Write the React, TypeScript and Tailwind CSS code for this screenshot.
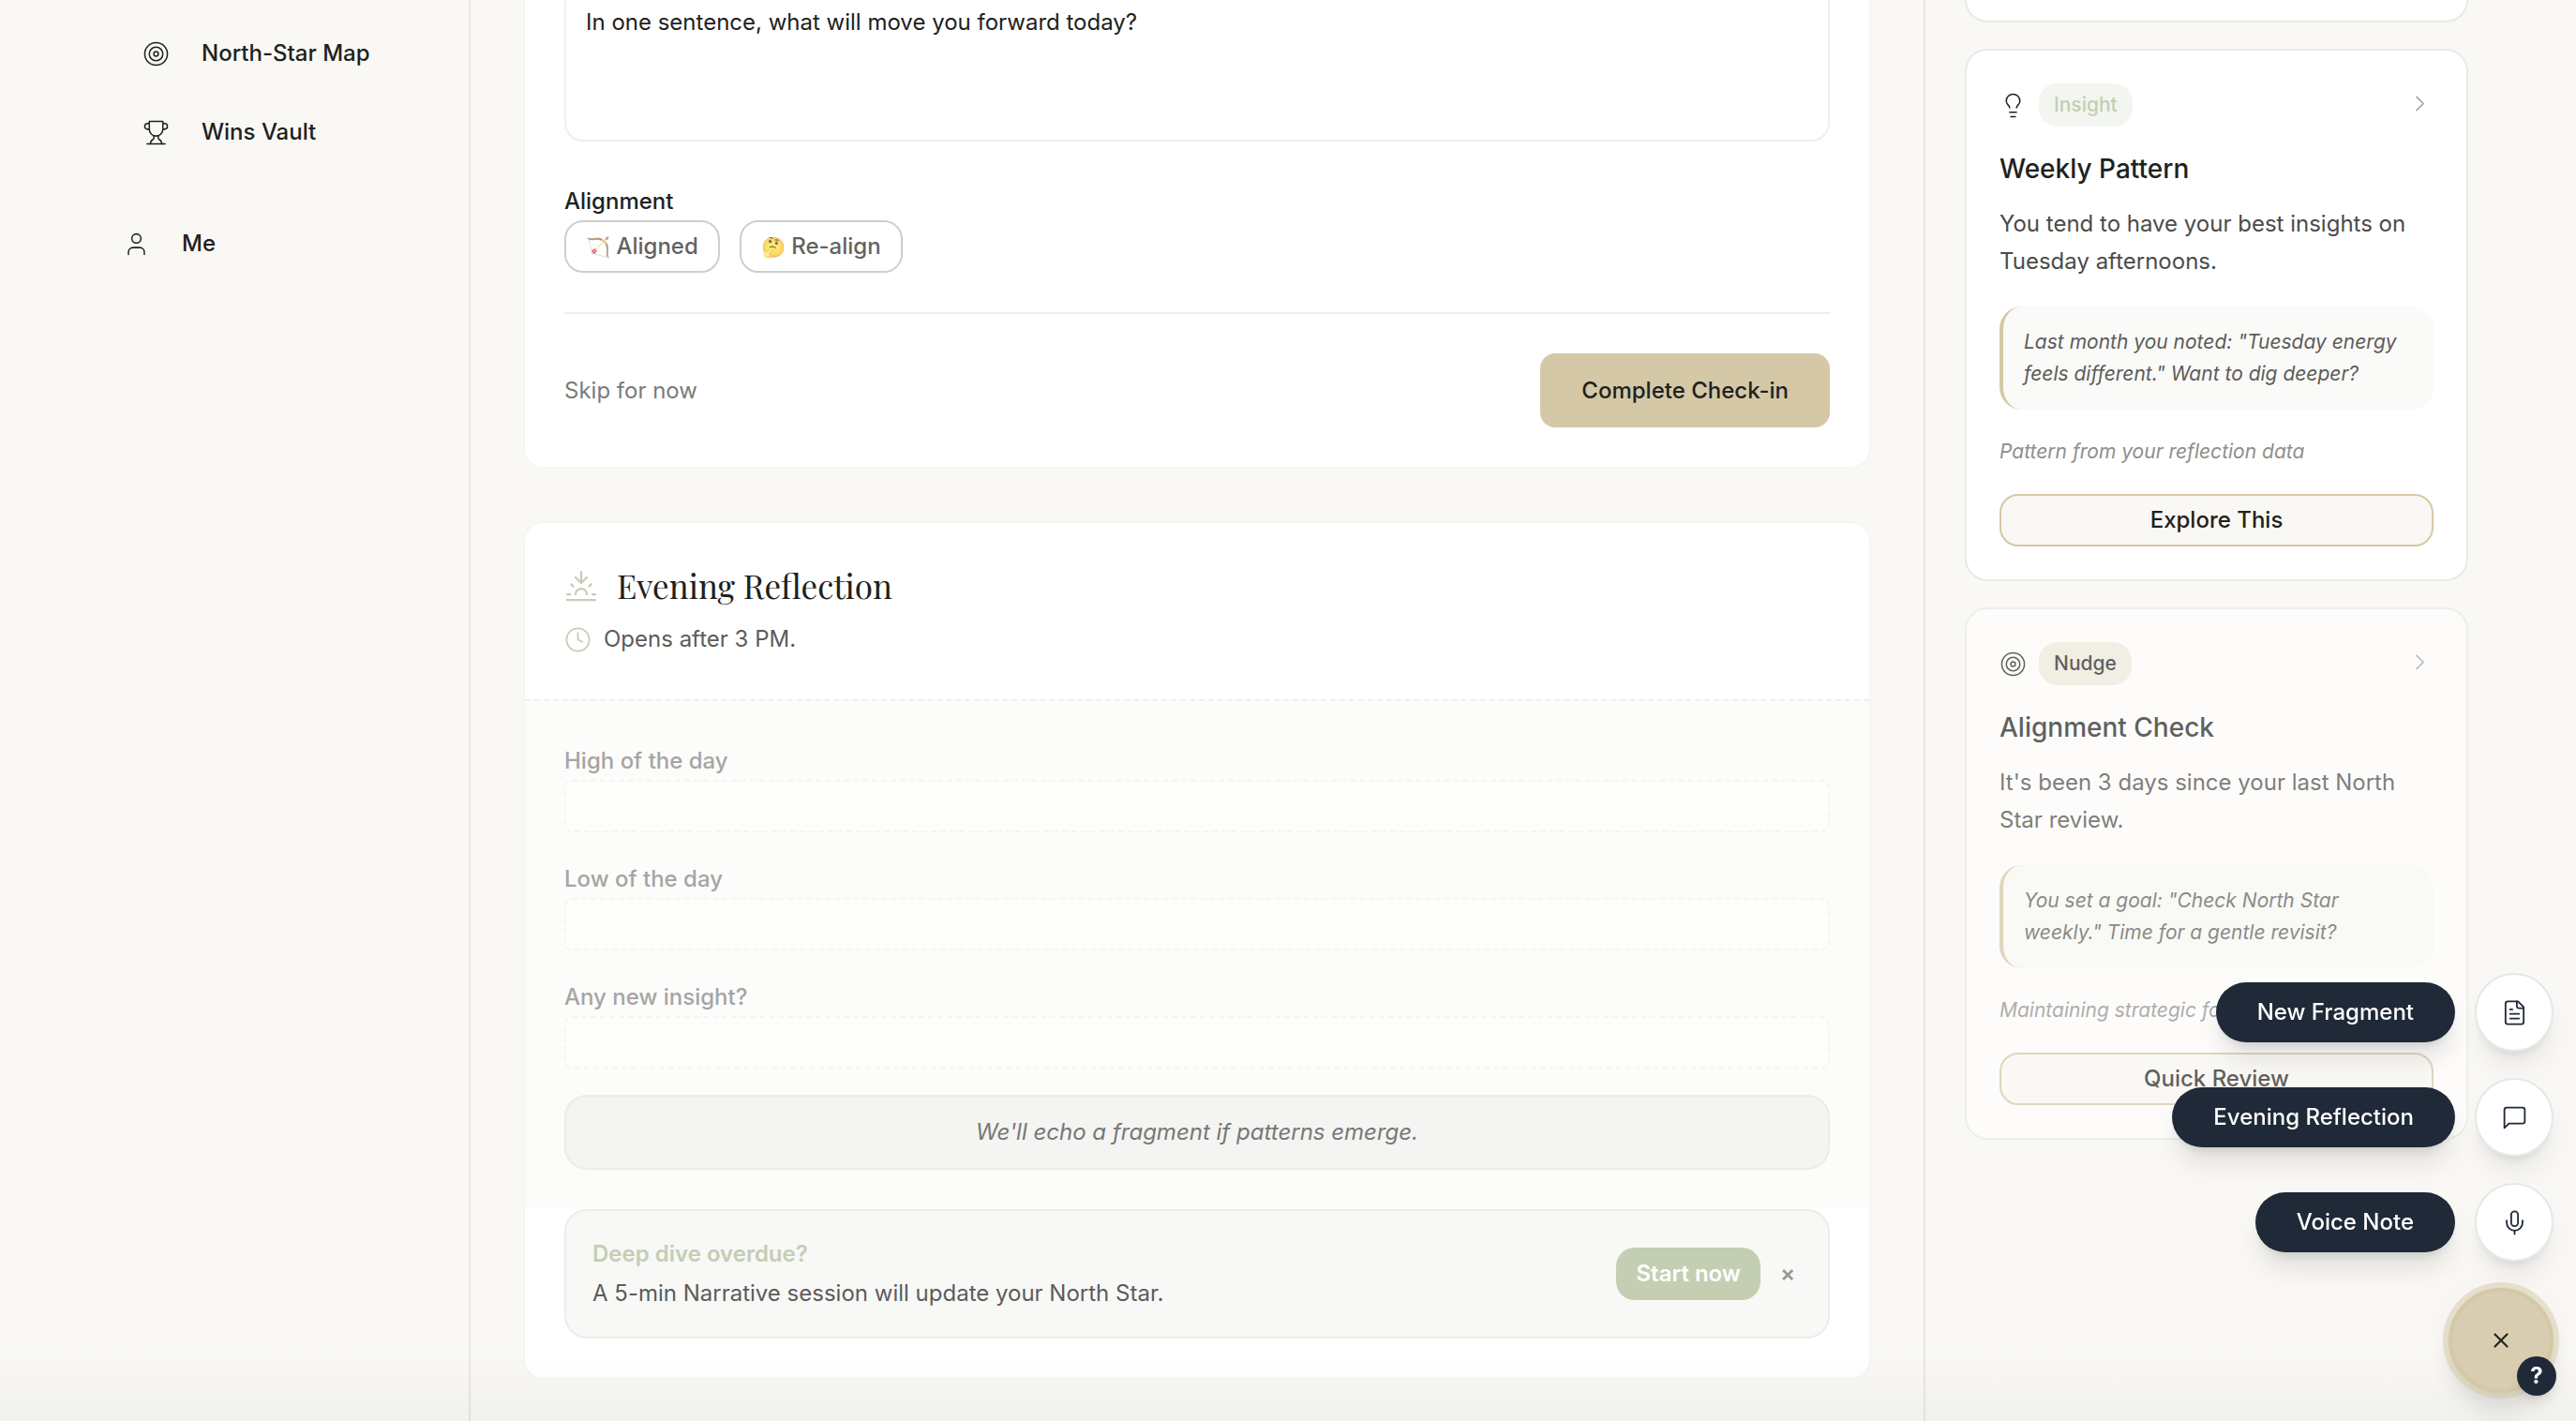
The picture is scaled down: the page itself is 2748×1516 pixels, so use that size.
import type { ReactNode } from "react";

const TARGET = [
  "M22 12a10 10 0 1 1-20 0a10 10 0 1 1 20 0Z",
  "M18 12a6 6 0 1 1-12 0a6 6 0 1 1 12 0Z",
  "M14 12a2 2 0 1 1-4 0a2 2 0 1 1 4 0Z",
];
const TROPHY = [
  "M6 9H4.5a2.5 2.5 0 0 1 0-5H6",
  "M18 9h1.5a2.5 2.5 0 0 0 0-5H18",
  "M4 22h16",
  "M10 14.66V17c0 .55-.47.98-.97 1.21C7.85 18.75 7 20.24 7 22",
  "M14 14.66V17c0 .55.47.98.97 1.21C16.15 18.75 17 20.24 17 22",
  "M18 2H6v7a6 6 0 0 0 12 0V2Z",
];
const USER = ["M19 21v-2a4 4 0 0 0-4-4H9a4 4 0 0 0-4 4v2", "M16 7a4 4 0 1 1-8 0a4 4 0 1 1 8 0Z"];
const SUNSET = [
  "M12 10V2",
  "m4.93 10.93 1.41 1.41",
  "M2 18h2",
  "M20 18h2",
  "m19.07 10.93-1.41 1.41",
  "M22 22H2",
  "m16 6-4 4-4-4",
  "M16 18a4 4 0 0 0-8 0",
];
const CLOCK = ["M22 12a10 10 0 1 1-20 0a10 10 0 1 1 20 0Z", "M12 6v6l4 2"];
const BULB = [
  "M15 14c.2-1 .7-1.7 1.5-2.5 1-.9 1.5-2.2 1.5-3.5A6 6 0 0 0 6 8c0 1 .2 2.2 1.5 3.5.7.7 1.3 1.5 1.5 2.5",
  "M9 18h6",
  "M10 22h4",
];
const CHEVRON = ["m9 18 6-6-6-6"];
const FILE_TEXT = [
  "M15 2H6a2 2 0 0 0-2 2v16a2 2 0 0 0 2 2h12a2 2 0 0 0 2-2V7Z",
  "M14 2v4a2 2 0 0 0 2 2h4",
  "M10 9H8",
  "M16 13H8",
  "M16 17H8",
];
const MESSAGE = ["M21 15a2 2 0 0 1-2 2H7l-4 4V5a2 2 0 0 1 2-2h14a2 2 0 0 1 2 2z"];
const MIC = [
  "M12 2a3 3 0 0 0-3 3v7a3 3 0 0 0 6 0V5a3 3 0 0 0-3-3Z",
  "M19 10v2a7 7 0 0 1-14 0v-2",
  "M12 19v3",
];
const CROSS = ["M18 6 6 18", "m6 6 12 12"];

function Icon({ paths, size = 29, stroke = 1.25, className }: { paths: string[]; size?: number; stroke?: number; className?: string }) {
  return (
    <svg
      aria-hidden="true"
      width={size}
      height={size}
      viewBox="0 0 24 24"
      fill="none"
      stroke="currentColor"
      strokeWidth={stroke}
      strokeLinecap="round"
      strokeLinejoin="round"
      className={className ?? "shrink-0"}
    >
      {paths.map((d) => (
        <path key={d} d={d} />
      ))}
    </svg>
  );
}

function NavItem({ paths, label, nested }: { paths: string[]; label: string; nested?: boolean }) {
  return (
    <a href="#" className={nested ? "flex items-center gap-[34px] pl-[37px] font-medium" : "flex items-center gap-[34px] pl-4 font-medium"}>
      <Icon paths={paths} />
      {label}
    </a>
  );
}

function AlignmentButton({ emoji, label }: { emoji: string; label: string }) {
  return (
    <button type="button" className="h-14 rounded-[20px] border-2 border-[#cfcfcf] px-[21px] font-medium">
      <span className="opacity-70">
        <span className="text-[21px]">{emoji}</span> {label}
      </span>
    </button>
  );
}

function LockedField({ id, label }: { id: string; label: string }) {
  return (
    <div className="flex flex-col">
      <label htmlFor={id} className="font-medium text-[#a5a5a3]">
        {label}
      </label>
      <input id={id} disabled className="h-14 w-full rounded-lg border-2 border-dashed border-[#f5f5f2] bg-[#fdfdfb] px-5" />
    </div>
  );
}

type InsightCardProps = {
  paths: string[];
  badge: string;
  badgeClass: string;
  title: string;
  body: string;
  quote: string;
  source: string;
  action: string;
  faded?: boolean;
};

function InsightCard(p: InsightCardProps) {
  return (
    <article
      className={
        p.faded
          ? "flex flex-col rounded-3xl border-2 border-[#e9e9e9] bg-white p-[35px] opacity-70"
          : "flex flex-col rounded-3xl border-2 border-[#e9e9e9] bg-white p-[35px]"
      }
    >
      <div className="flex items-center justify-between">
        <div className="flex items-center gap-[13px]">
          <Icon paths={p.paths} />
          <span className={p.badgeClass}>{p.badge}</span>
        </div>
        <button type="button" aria-label={"Open " + p.title} className="flex self-start pt-[7px] text-[#9a9a98]">
          <Icon paths={CHEVRON} />
        </button>
      </div>
      <h3 className="mt-[22px] text-[28px] leading-[46px] font-medium">{p.title}</h3>
      <p className="mt-4 text-[#4b4b49]">{p.body}</p>
      <blockquote className="mt-7 rounded-3xl border-l-4 border-[#d4c8a6] bg-[#fafaf8] px-[22px] py-[21px] text-[21px] leading-[34px] text-[#5c5c5a] italic">
        {p.quote}
      </blockquote>
      <p className="mt-7 text-[21px] leading-[34px] text-[#8e8e8c] italic">{p.source}</p>
      <button type="button" className="mt-7 h-14 rounded-[20px] border-2 border-[#d4c8a6] bg-[#f9f8f4] font-medium">
        {p.action}
      </button>
    </article>
  );
}

function QuickAction({ label, paths }: { label: string; paths: string[] }) {
  return (
    <div className="flex items-center gap-[21px]">
      <span className="rounded-full bg-[#1f2937] px-11 py-3 leading-10 font-medium text-white shadow-[0_20px_30px_-6px_rgba(0,0,0,0.12),0_8px_12px_-6px_rgba(0,0,0,0.12)]">
        {label}
      </span>
      <button
        type="button"
        aria-label={label}
        className="flex size-[84px] items-center justify-center rounded-full border-2 border-[#e5e7eb] bg-white text-[#1f2937] shadow-[0_20px_30px_-6px_rgba(0,0,0,0.08),0_8px_12px_-6px_rgba(0,0,0,0.1)]"
      >
        <Icon paths={paths} stroke={1.5} />
      </button>
    </div>
  );
}

function Panel({ children, className }: { children: ReactNode; className: string }) {
  return <section className={className}>{children}</section>;
}

export default function App() {
  return (
    <div className="relative grid min-h-screen grid-cols-[387px_1fr_581px] overflow-hidden bg-[#f9f8f4] px-[115px] font-['Inter',sans-serif] text-2xl leading-10 text-[#20211d]">
      <nav className="flex flex-col border-r-2 border-[#e7e6e2] pt-[37px]">
        <NavItem paths={TARGET} label="North-Star Map" nested />
        <div className="mt-11">
          <NavItem paths={TROPHY} label="Wins Vault" nested />
        </div>
        <div className="mt-[79px]">
          <NavItem paths={USER} label="Me" />
        </div>
      </nav>

      <main className="flex flex-col gap-[60px] px-[58px] pb-[46px]">
        <Panel className="flex flex-col rounded-b-[20px] bg-white px-[42px] pb-[42px] shadow-[0_0_0_2px_rgba(0,0,0,0.012)]">
          <textarea
            aria-label="Focus for today"
            defaultValue="In one sentence, what will move you forward today?"
            className="-mt-4 h-[167px] resize-none rounded-[20px] border-2 border-[#efefe9] bg-white px-[21px] pt-[18px]"
          />
          <h3 className="mt-11 font-medium">Alignment</h3>
          <div className="flex gap-[21px]">
            <AlignmentButton emoji="🏹" label="Aligned" />
            <AlignmentButton emoji="🤔" label="Re-align" />
          </div>
          <div className="mt-[42px] flex items-center justify-between border-t-2 border-[#eeeeec] pt-[42px]">
            <button type="button" className="text-[#7b7b79]">
              Skip for now
            </button>
            <button type="button" className="h-[79px] rounded-2xl bg-[#d4c8a6] px-11 font-medium">
              Complete Check-in
            </button>
          </div>
        </Panel>

        <Panel className="flex flex-col overflow-hidden rounded-[20px] bg-white shadow-[0_0_0_2px_rgba(0,0,0,0.012)]">
          <header className="px-[42px] pt-[42px] pb-11">
            <div className="flex items-center gap-5">
              <Icon paths={SUNSET} size={36} stroke={1.5} className="shrink-0 text-[#c4ceb3]" />
              <h2 className="font-['Playfair_Display','Liberation_Serif',serif] text-[35px] leading-[50px]">Evening Reflection</h2>
            </div>
            <div className="mt-3 flex items-center gap-[13px] text-[#5c5c5a]">
              <Icon paths={CLOCK} stroke={1.5} className="shrink-0 text-[#c4ceb3]" />
              Opens after 3 PM.
            </div>
          </header>
          <div className="flex flex-col gap-7 border-t-2 border-dashed border-[#f0f0ea] bg-[#fcfcfa] px-[42px] pt-11 pb-[42px]">
            <div className="flex flex-col gap-[30px]">
              <LockedField id="high" label="High of the day" />
              <LockedField id="low" label="Low of the day" />
              <LockedField id="insight" label="Any new insight?" />
            </div>
            <p className="rounded-3xl border-2 border-[#ecece6] bg-[#f4f4f2] py-[18px] text-center text-[#777775] italic">
              We'll echo a fragment if patterns emerge.
            </p>
          </div>
          <div className="px-[42px] pb-[42px]">
            <div className="flex items-center justify-between rounded-3xl border-2 border-[#edede8] bg-[#f8f8f6] px-7 py-[26px]">
              <div className="flex flex-col gap-0.5">
                <h4 className="font-semibold text-[#c4ceb3]">Deep dive overdue?</h4>
                <p className="text-[#5c5c5a]">A 5-min Narrative session will update your North Star.</p>
              </div>
              <div className="flex items-center gap-[14px]">
                <button type="button" className="h-14 rounded-[20px] bg-[#c4ceb3] px-[21px] font-semibold text-white">
                  Start now
                </button>
                <button type="button" aria-label="Dismiss" className="w-[30px] text-center font-semibold text-[#999997]">
                  ×
                </button>
              </div>
            </div>
          </div>
        </Panel>
      </main>

      <aside className="flex flex-col gap-7 border-l-2 border-[#e7e6e2] pl-[42px]">
        <div className="h-6 rounded-b-3xl border-2 border-t-0 border-[#e9e9e9] bg-white" />
        <InsightCard
          paths={BULB}
          badge="Insight"
          badgeClass="rounded-[20px] bg-[#f3f5f0] px-4 py-1.5 text-[21px] leading-[34px] font-medium text-[#c4ceb3]"
          title="Weekly Pattern"
          body="You tend to have your best insights on Tuesday afternoons."
          quote={'Last month you noted: "Tuesday energy feels different." Want to dig deeper?'}
          source="Pattern from your reflection data"
          action="Explore This"
        />
        <InsightCard
          paths={TARGET}
          badge="Nudge"
          badgeClass="rounded-[20px] bg-[#eeeadc] px-4 py-1.5 text-[21px] leading-[34px] font-medium"
          title="Alignment Check"
          body="It's been 3 days since your last North Star review."
          quote={'You set a goal: "Check North Star weekly." Time for a gentle revisit?'}
          source="Maintaining strategic focus"
          action="Quick Review"
          faded
        />
      </aside>

      <div className="pointer-events-none absolute inset-x-0 bottom-0 h-18 bg-linear-to-t from-black/3 to-transparent" />

      <div className="fixed right-6 bottom-[30px] flex flex-col items-end gap-7">
        <QuickAction label="New Fragment" paths={FILE_TEXT} />
        <QuickAction label="Evening Reflection" paths={MESSAGE} />
        <QuickAction label="Voice Note" paths={MIC} />
        <div className="relative">
          <button
            type="button"
            aria-label="Close quick actions"
            className="flex size-28 items-center justify-center rounded-full border-4 border-[#d4c8a6] bg-[#d8cdb0] shadow-[0_0_0_6px_rgba(212,200,166,0.5),0_20px_30px_-6px_rgba(0,0,0,0.15),0_0_40px_rgba(0,0,0,0.04)]"
          >
            <Icon paths={CROSS} size={26} stroke={2} />
          </button>
          <button
            type="button"
            aria-label="Help"
            className="absolute -right-[3px] -bottom-[3px] flex size-[42px] items-center justify-center rounded-full bg-[#1f2937] font-bold text-white shadow-lg"
          >
            ?
          </button>
        </div>
      </div>
    </div>
  );
}
